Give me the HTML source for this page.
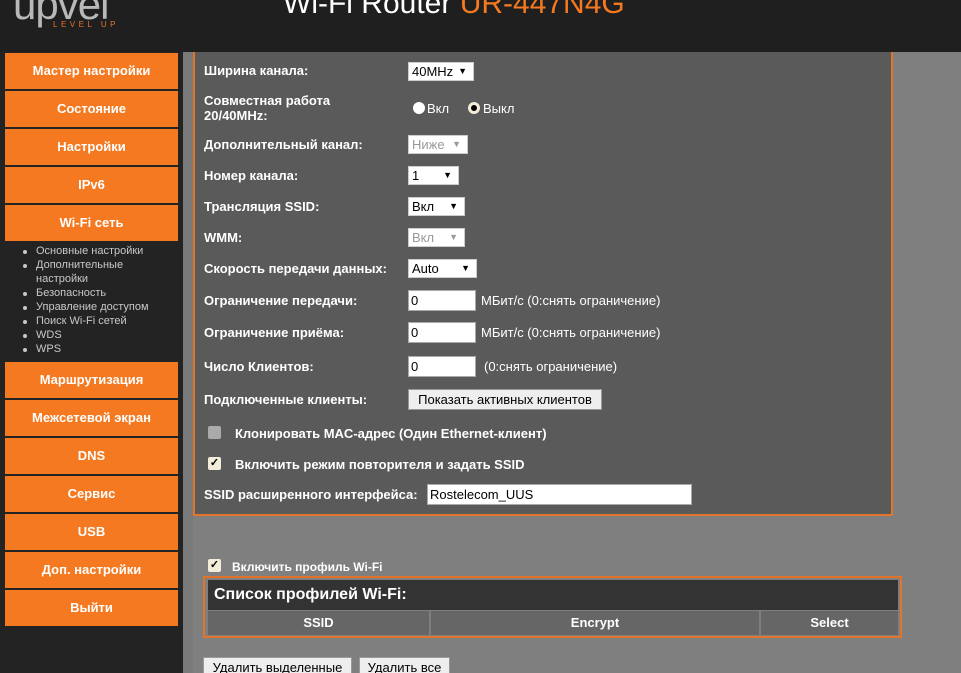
<!DOCTYPE html>
<html><head><meta charset="utf-8"><style>
*{margin:0;padding:0;box-sizing:border-box}
html{overflow:hidden}
body{width:961px;height:673px;overflow:hidden;background:#7f7f7f;font-family:"Liberation Sans",Arial,sans-serif;position:relative}
.a{position:absolute}
.hdr{left:0;top:0;width:961px;height:52px;background:#1f1f1f}
.side{left:0;top:52px;width:183px;height:621px;background:#232323}
.btn{position:absolute;left:5px;width:173px;height:36px;background:#f47920;color:#fff;font-family:"Liberation Sans Narrow","Liberation Sans",sans-serif;font-weight:bold;font-size:13px;text-align:center;line-height:36px}
.sub{left:23px;top:244px;color:#c8c8c8;font-size:11px;line-height:14px}
.sub div{position:relative;padding-left:13px}
.sub div.b:before{content:"";position:absolute;left:0;top:6px;width:4px;height:4px;border-radius:2px;background:#c8c8c8}
.panel{left:193px;top:52px;width:700px;height:464px;background:#5a5a5a;border:2px solid #e3742b;border-top:none}
.lbl{position:absolute;left:204px;color:#fff;font-family:"Liberation Sans Narrow","Liberation Sans",sans-serif;font-weight:bold;font-size:13px}
.sel{position:absolute;left:408px;height:19px;background:#fff;border:1px solid #ccc;font-size:13px;color:#000;padding-left:3px;line-height:17px}
.sel.d{color:#999}
.sel i{position:absolute;right:6px;top:0;font-style:normal;font-size:9px}
.inp{position:absolute;left:408px;width:68px;height:21px;background:#fff;border:1px solid #aaa;font-size:13px;padding-left:2px;line-height:19px}
.t{position:absolute;color:#fff;font-size:13px}
.cb{position:absolute;width:13px;height:13px;border-radius:2px;background:#f2ecd8;font-size:11px;line-height:13px;text-align:center;color:#000;font-weight:bold}
.pb{position:absolute;background:#eee;border:1px solid #999;font-size:13px;text-align:center;color:#000}
</style></head><body>
<div class="a hdr"></div>
<div class="a" style="left:13px;top:-19px;font-size:42px;color:#b8b8b8;letter-spacing:-1px">upvel</div>
<div class="a" style="left:53px;top:20px;font-size:8px;color:#e3742b;letter-spacing:3.5px">LEVEL UP</div>
<div class="a" style="left:283px;top:-13px;font-size:30px;color:#fff">Wi-Fi Router <span style="color:#f47920">UR-447N4G</span></div>
<div class="a side"></div>
<div class="a" style="left:183px;top:52px;width:10px;height:621px;background:#7a7a7a"></div>
<div class="btn" style="top:53px">Мастер настройки</div>
<div class="btn" style="top:91px">Состояние</div>
<div class="btn" style="top:129px">Настройки</div>
<div class="btn" style="top:167px">IPv6</div>
<div class="btn" style="top:205px">Wi-Fi сеть</div>
<div class="a sub"><div class="b">Основные настройки</div><div class="b">Дополнительные</div><div>настройки</div><div class="b">Безопасность</div><div class="b">Управление доступом</div><div class="b">Поиск Wi-Fi сетей</div><div class="b">WDS</div><div class="b">WPS</div></div>
<div class="btn" style="top:362px">Маршрутизация</div>
<div class="btn" style="top:400px">Межсетевой экран</div>
<div class="btn" style="top:438px">DNS</div>
<div class="btn" style="top:476px">Сервис</div>
<div class="btn" style="top:514px">USB</div>
<div class="btn" style="top:552px">Доп. настройки</div>
<div class="btn" style="top:590px">Выйти</div>

<div class="a panel"></div>
<div class="lbl" style="top:63px">Ширина канала:</div>
<div class="sel" style="top:62px;width:66px">40MHz<i>▼</i></div>
<div class="lbl" style="top:93px;line-height:15px">Совместная работа<br>20/40MHz:</div>
<div class="a" style="left:413px;top:102px;width:12px;height:12px;border-radius:6px;background:#fff"></div>
<div class="t" style="left:427px;top:101px">Вкл</div>
<div class="a" style="left:468px;top:102px;width:12px;height:12px;border-radius:6px;background:#f2ecd8"><div class="a" style="left:3px;top:3px;width:6px;height:6px;border-radius:3px;background:#000"></div></div>
<div class="t" style="left:483px;top:101px">Выкл</div>
<div class="lbl" style="top:137px">Дополнительный канал:</div>
<div class="sel d" style="top:135px;width:60px">Ниже<i>▼</i></div>
<div class="lbl" style="top:168px">Номер канала:</div>
<div class="sel" style="top:166px;width:51px">1<i>▼</i></div>
<div class="lbl" style="top:199px">Трансляция SSID:</div>
<div class="sel" style="top:197px;width:57px">Вкл<i>▼</i></div>
<div class="lbl" style="top:230px">WMM:</div>
<div class="sel d" style="top:228px;width:57px">Вкл<i>▼</i></div>
<div class="lbl" style="top:261px">Скорость передачи данных:</div>
<div class="sel" style="top:259px;width:69px">Auto<i>▼</i></div>
<div class="lbl" style="top:293px">Ограничение передачи:</div>
<div class="inp" style="top:290px">0</div><div class="t" style="left:481px;top:293px">МБит/с (0:снять ограничение)</div>
<div class="lbl" style="top:325px">Ограничение приёма:</div>
<div class="inp" style="top:322px">0</div><div class="t" style="left:481px;top:325px">МБит/с (0:снять ограничение)</div>
<div class="lbl" style="top:359px">Число Клиентов:</div>
<div class="inp" style="top:356px">0</div><div class="t" style="left:484px;top:359px">(0:снять ограничение)</div>
<div class="lbl" style="top:392px">Подключенные клиенты:</div>
<div class="pb" style="left:408px;top:389px;width:194px;height:21px;line-height:19px">Показать активных клиентов</div>
<div class="cb" style="left:208px;top:426px;background:#aaa"></div>
<div class="lbl" style="left:235px;top:426px">Клонировать MAC-адрес (Один Ethernet-клиент)</div>
<div class="cb" style="left:208px;top:457px">✓</div>
<div class="lbl" style="left:235px;top:457px">Включить режим повторителя и задать SSID</div>
<div class="lbl" style="top:487px">SSID расширенного интерфейса:</div>
<div class="a" style="left:427px;top:484px;width:265px;height:21px;background:#fff;border:1px solid #aaa;font-size:13px;padding-left:2px;line-height:19px">Rostelecom_UUS</div>

<div class="cb" style="left:208px;top:559px">✓</div>
<div class="a" style="left:232px;top:560px;color:#fff;font-family:'Liberation Sans Narrow','Liberation Sans',sans-serif;font-weight:bold;font-size:12px">Включить профиль Wi-Fi</div>
<div class="a" style="left:203px;top:576px;width:699px;height:62px;border:2px solid #e3742b;background:#7f7f7f"></div>
<div class="a" style="left:208px;top:580px;width:690px;height:30px;background:#333;color:#fff;font-family:'Liberation Sans Narrow','Liberation Sans',sans-serif;font-weight:bold;font-size:16px;line-height:30px;padding-left:6px">Список профилей Wi-Fi:</div>
<div class="a" style="left:208px;top:611px;width:221px;height:24px;background:#666;color:#fff;font-weight:bold;font-size:13px;text-align:center;line-height:24px">SSID</div>
<div class="a" style="left:431px;top:611px;width:328px;height:24px;background:#666;color:#fff;font-weight:bold;font-size:13px;text-align:center;line-height:24px">Encrypt</div>
<div class="a" style="left:761px;top:611px;width:137px;height:24px;background:#666;color:#fff;font-weight:bold;font-size:13px;text-align:center;line-height:24px">Select</div>
<div class="pb" style="left:203px;top:657px;width:149px;height:22px;line-height:20px">Удалить выделенные</div>
<div class="pb" style="left:359px;top:657px;width:91px;height:22px;line-height:20px">Удалить все</div>
</body></html>
